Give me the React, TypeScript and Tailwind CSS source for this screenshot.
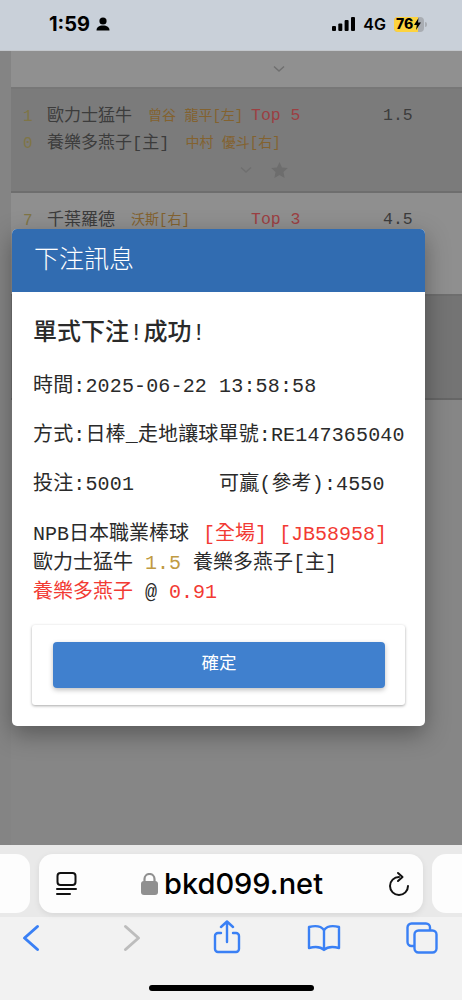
const mono = "font-['Liberation_Mono','Noto_Sans_CJK_TC',monospace]";

function Chevron() {
  return (
    <svg width="12" height="8" viewBox="0 0 12 8" fill="none">
      <path d="M1 1.500 6 6l5-4.500" stroke="#6f6f6f" strokeWidth="1.400" />
    </svg>
  );
}

function MatchRow({ n, team, pitcher, top, value, first }: { n: string; team: string; pitcher?: string; top?: string; value?: string; first?: boolean }) {
  return (
    <div className={`flex h-[27px] items-center ${first ? "mt-[14px]" : ""}`}>
      <span className="w-[36px] shrink-0 pl-[12px] text-[16px] text-[#7f7546]">{n}</span>
      <div className="flex w-[204px] shrink-0 items-center whitespace-nowrap">
        <span className="text-[17px]">{team}</span>
        {pitcher && <span className="ml-[16px] text-[14px] text-[#83622f]">{pitcher}</span>}
      </div>
      {top && <span className="w-[132px] shrink-0 text-[16.500px] text-[#9c3f42]">{top}</span>}
      {value && <span className="text-[16.500px]">{value}</span>}
    </div>
  );
}

function App() {
  return (
    <div className="relative flex h-[1000px] w-[462px] flex-col overflow-hidden bg-[#f2f2f2] font-['Inter','Liberation_Sans',sans-serif]">
      <div className="flex h-[51px] shrink-0 items-center justify-between border-b border-[#c3c7cc] bg-[#c9d0d9] pb-[2px] pl-[49px] pr-[35px]">
        <div className="flex items-center gap-[6px] text-[20px] font-bold leading-none text-black">
          <span>1:59</span>
          <svg width="14" height="14" viewBox="0 0 14 14" fill="#000">
            <circle cx="7" cy="4" r="3.600" />
            <path d="M0.500 13.500c0-3.400 2.600-5 6.500-5s6.500 1.600 6.500 5z" />
          </svg>
        </div>
        <div className="flex items-center gap-[8px]">
          <svg width="23" height="16" viewBox="0 0 23 16" fill="#000">
            <rect x="0" y="10" width="4" height="5" rx="1" />
            <rect x="6.300" y="7.500" width="4" height="7.500" rx="1" />
            <rect x="12.600" y="4" width="4" height="11" rx="1" />
            <rect x="19" y="1" width="4" height="14" rx="1" />
          </svg>
          <span className="text-[16px] font-semibold leading-none text-black">4G</span>
          <div className="flex items-center gap-[1px]">
            <div className="flex h-[15px] w-[30px] items-center overflow-hidden rounded-[4px] bg-[#a9adb3]">
              <div className="flex h-full w-[24px] shrink-0 items-center bg-[#fdd33f] pl-[2px] text-[14px] font-extrabold leading-none text-black">76</div>
              <svg width="7" height="12" viewBox="0 0 7 12" fill="#000" className="-ml-[4px] shrink-0">
                <path d="M4.500 0 0 7h2.800L2 12l5-7.400H4z" />
              </svg>
            </div>
            <div className="h-[5px] w-[2px] rounded-r-[2px] bg-[#a9adb3]" />
          </div>
        </div>
      </div>

      <div className={`relative flex flex-1 flex-col bg-[#848484] pl-[11px] ${mono}`}>
        <div className="flex h-[38px] shrink-0 items-center border-b-2 border-[#777] bg-[#909090] pl-[262px]">
          <Chevron />
        </div>
        <div className="h-[104px] shrink-0 border-b-2 border-[#6e6e6e] bg-[#7b7b7b] text-[#3c3c3c]">
          <MatchRow first n="1" team="歐力士猛牛" pitcher="曾谷 龍平[左]" top="Top 5" value="1.5" />
          <MatchRow n="0" team="養樂多燕子[主]" pitcher="中村 優斗[右]" />
          <div className="flex h-[26px] items-center gap-[19px] pl-[229px]">
            <Chevron />
            <svg width="17" height="16" viewBox="0 0 24 23" fill="#6d6d6d">
              <path d="M12 0l3.600 8 8.400.8-6.300 5.700L19.400 23 12 18.600 4.600 23l1.700-8.500L0 8.800 8.400 8z" />
            </svg>
          </div>
        </div>
        <div className="h-[103px] shrink-0 border-b-2 border-[#6e6e6e] bg-[#8f8f8f] text-[#3c3c3c]">
          <MatchRow first n="7" team="千葉羅德" pitcher="沃斯[右]" top="Top 3" value="4.5" />
        </div>
        <div className="h-[104px] shrink-0 border-b-2 border-[#666] bg-[#747474]" />
        <div className="flex-1 bg-[#868686]" />

        <div className="absolute left-[12px] top-[178px] w-[413px] overflow-hidden rounded-[5px] bg-white shadow-[0_8px_24px_rgba(0,0,0,0.35)]">
          <div className="flex h-[63px] items-center bg-[#316cb1] pl-[22px] pt-[3px] text-[25px] font-light text-white">下注訊息</div>
          <div className="pl-[21px] text-[#2a2a2a]">
            <div className="pt-[26px] text-[24px] font-medium leading-[32px]">單式下注!成功!</div>
            <div className="mt-[23px] text-[20px] leading-[28px] tracking-[0.15px]">時間:2025-06-22 13:58:58</div>
            <div className="mt-[21px] whitespace-nowrap text-[20px] leading-[28px] tracking-[0.15px]">方式:日棒_走地讓球單號:RE147365040</div>
            <div className="mt-[21px] flex text-[20px] leading-[28px] tracking-[0.15px]">
              <span className="w-[186px]">投注:5001</span>
              <span>可贏(參考):4550</span>
            </div>
            <div className="mt-[21px] whitespace-nowrap text-[20px] leading-[29px]">
              <div>NPB日本職業棒球 <span className="ml-[2px] text-[#f23a33]">[全場] [JB58958]</span></div>
              <div>歐力士猛牛 <span className="text-[#c09a42]">1.5</span> 養樂多燕子[主]</div>
              <div><span className="text-[#f23a33]">養樂多燕子</span> @ <span className="text-[#f23a33]">0.91</span></div>
            </div>
          </div>
          <div className="mx-[20px] mb-[21px] mt-[18px] rounded-[3px] bg-white py-[17px] pl-[21px] pr-[20px] shadow-[0_1px_3px_rgba(0,0,0,0.35)]">
            <div className="flex h-[46px] items-center justify-center rounded-[4px] bg-[#4080ce] pb-[1px] text-[17.500px] font-normal text-white shadow-[0_2px_5px_rgba(0,0,0,0.25)]">確定</div>
          </div>
        </div>
      </div>

      <div className="h-[155px] shrink-0 bg-[#f2f2f2]">
        <div className="flex h-[72px] items-start justify-between gap-[9px] bg-[#e9e9e9] pt-[9px]">
          <div className="h-[59px] w-[30px] rounded-r-[14px] bg-[#fdfdfd]" />
          <div className="flex h-[59px] flex-1 items-center justify-between rounded-[14px] bg-[#fdfdfd] pl-[16px] pr-[12px] shadow-[0_2px_6px_rgba(0,0,0,0.08)]">
            <svg width="22" height="26" viewBox="0 0 22 26" fill="none" stroke="#111" strokeWidth="2">
              <rect x="2.500" y="2" width="18" height="12" rx="3" />
              <path d="M2 18h19M2 23h13" strokeLinecap="round" />
            </svg>
            <div className="-ml-[2px] flex items-center gap-[6px]">
              <svg width="17" height="22" viewBox="0 0 17 22" fill="#909090">
                <rect x="0" y="8" width="17" height="14" rx="3" />
                <path d="M3.500 9V6a5 5 0 0 1 10 0v3" fill="none" stroke="#909090" strokeWidth="2.200" />
              </svg>
              <span className="text-[29px] font-medium leading-none text-black">bkd099.net</span>
            </div>
            <svg width="22" height="26" viewBox="0 0 22 26" fill="none" stroke="#111" strokeWidth="2" strokeLinecap="round" strokeLinejoin="round">
              <path d="M10 6A9 9 0 1 0 19 15" />
              <path d="M9 2l4.500 4L9 10" />
            </svg>
          </div>
          <div className="h-[59px] w-[30px] rounded-l-[14px] bg-[#fdfdfd]" />
        </div>
        <div className="flex h-[42px] items-center pl-[22px]">
          <svg width="18" height="28" viewBox="0 0 18 28" fill="none" stroke="#3a80f5" strokeWidth="3" strokeLinecap="round" strokeLinejoin="round">
            <path d="M15.500 2.500 2.500 14l13 11.500" />
          </svg>
          <svg width="18" height="28" viewBox="0 0 18 28" fill="none" stroke="#bdbdbd" strokeWidth="3" strokeLinecap="round" strokeLinejoin="round" className="ml-[83px]">
            <path d="M2.500 2.500 15.500 14l-13 11.500" />
          </svg>
          <svg width="28" height="34" viewBox="0 0 28 34" fill="none" stroke="#3a80f5" strokeWidth="2.400" strokeLinecap="round" strokeLinejoin="round" className="-mt-[3px] ml-[72px]">
            <path d="M8 13H5a3 3 0 0 0-3 3v13a3 3 0 0 0 3 3h18a3 3 0 0 0 3-3V16a3 3 0 0 0-3-3h-3" />
            <path d="M14 22V2M8 7l6-5.500L20 7" />
          </svg>
          <svg width="34" height="28" viewBox="0 0 34 28" fill="none" stroke="#3a80f5" strokeWidth="2.400" strokeLinejoin="round" className="ml-[66px]">
            <path d="M17 6C14 2 8 1.500 2 3v21c6-1.500 12-1 15 2 3-3 9-3.500 15-2V3C26 1.500 20 2 17 6z" />
            <path d="M17 6v20" />
          </svg>
          <svg width="32" height="32" viewBox="0 0 32 32" fill="none" stroke="#3a80f5" strokeWidth="2.400" className="ml-[65px]">
            <rect x="8.500" y="8.500" width="22" height="22" rx="4" />
            <path d="M8 24H5.500a4 4 0 0 1-4-4V5.500a4 4 0 0 1 4-4H20a4 4 0 0 1 4 4V8" />
          </svg>
        </div>
        <div className="mx-auto mt-[26px] h-[6px] w-[165px] rounded-full bg-black" />
      </div>
    </div>
  );
}

export default App;
